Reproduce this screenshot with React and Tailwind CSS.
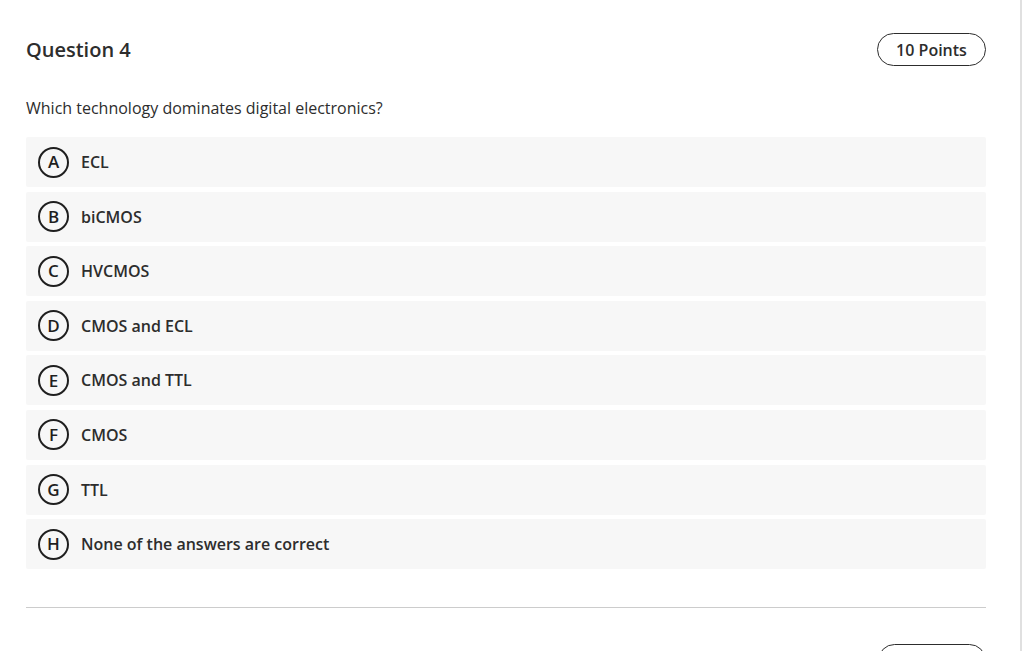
import React from "react";

const OPTIONS = [
  { key: "A", label: "ECL" },
  { key: "B", label: "biCMOS" },
  { key: "C", label: "HVCMOS" },
  { key: "D", label: "CMOS and ECL" },
  { key: "E", label: "CMOS and TTL" },
  { key: "F", label: "CMOS" },
  { key: "G", label: "TTL" },
  { key: "H", label: "None of the answers are correct" },
];

export default function App() {
  return (
    <div className="h-[651px] w-[1024px] overflow-hidden bg-white text-[#2d2d2d] font-['Open_Sans',sans-serif] flex">
      <div className="w-[1022px] border-r-2 border-[#e0e0e0] pl-[26px] pr-[34px] pt-[33px] flex-shrink-0">
        {/* HEADER */}
        <div className="flex items-center justify-between">
          <h2 className="text-[20px] font-semibold leading-[33px]">Question 4</h2>
          <span className="h-[33px] w-[109px] rounded-full border-[1.5px] border-[#2d2d2d] flex items-center justify-center text-[16px] font-semibold">
            10 Points
          </span>
        </div>

        <p className="mt-[32px] text-[16px] leading-[20px]">Which technology dominates digital electronics?</p>

        {/* OPTIONS */}
        <div className="mt-[19px] flex flex-col gap-[4.6px]">
          {OPTIONS.map((o) => (
            <div key={o.key} className="h-[50px] bg-[#f7f7f7] rounded-[2px] flex items-center pl-[12px]">
              <span className="w-[31px] h-[31px] rounded-full border-2 border-[#1f1f1f] flex items-center justify-center text-[17px] font-semibold text-[#1f1f1f]">
                {o.key}
              </span>
              <span className="ml-[12px] text-[16px] font-semibold">{o.label}</span>
            </div>
          ))}
        </div>

        <div className="mt-[38px] border-t border-[#cccccc]"></div>

        <div className="mt-[36px] flex justify-end">
          <button className="h-[33px] w-[108px] rounded-full border-[1.5px] border-[#2d2d2d]"></button>
        </div>
      </div>
    </div>
  );
}
